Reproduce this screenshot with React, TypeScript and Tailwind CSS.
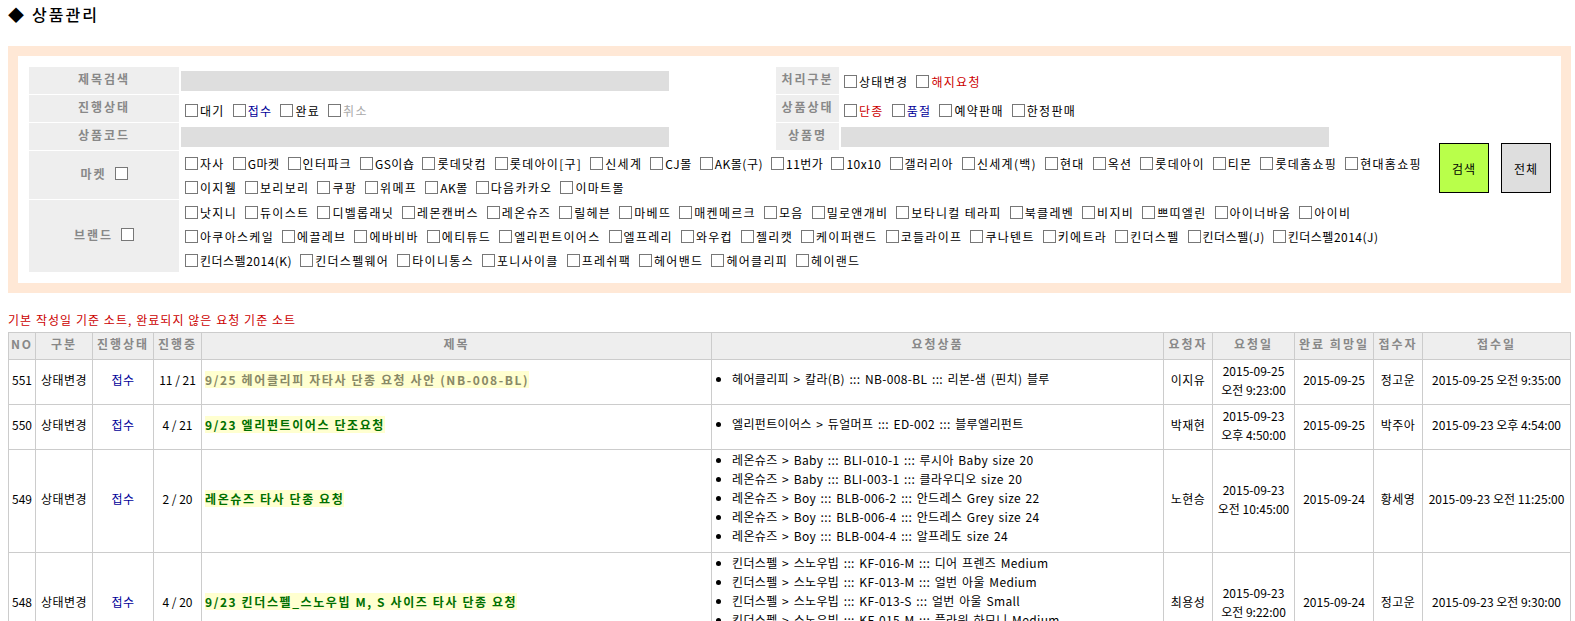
const font = { fontFamily: '"Noto Sans CJK KR", "Liberation Sans", sans-serif' };

type Opt = { t: string; c?: string };

const statusOpts: Opt[] = [
  { t: "대기" },
  { t: "접수", c: "text-[#000099]" },
  { t: "완료" },
  { t: "취소", c: "text-[#aaaaaa]" },
];

const markets: string[][] = [
  ["자사", "G마켓", "인터파크", "GS이숍", "롯데닷컴", "롯데아이[구]", "신세계", "CJ몰", "AK몰(구)", "11번가", "10x10", "갤러리아", "신세계(백)", "현대", "옥션", "롯데아이", "티몬", "롯데홈쇼핑", "현대홈쇼핑"],
  ["이지웰", "보리보리", "쿠팡", "위메프", "AK몰", "다음카카오", "이마트몰"],
];

const brands: string[][] = [
  ["낫지니", "듀이스트", "디벨롭래닛", "레몬캔버스", "레온슈즈", "릴헤븐", "마베뜨", "매켄메르크", "모음", "밀로앤개비", "보타니컬 테라피", "북클레벤", "비지비", "쁘띠엘린", "아이너바움", "아이비"],
  ["아쿠아스케일", "에끌레브", "에바비바", "에티튜드", "엘리펀트이어스", "엘프레리", "와우컵", "젤리캣", "케이퍼랜드", "코들라이프", "쿠나텐트", "키에트라", "킨더스펠", "킨더스펠(J)", "킨더스펠2014(J)"],
  ["킨더스펠2014(K)", "킨더스펠웨어", "타이니통스", "포니사이클", "프레쉬팩", "헤어밴드", "헤어클리피", "헤이랜드"],
];

const rows = [
  {
    no: 551, status: "11 / 21", title: "9/25 헤어클리피 자타사 단종 요청 사안 (NB-008-BL)", muted: true,
    items: ["헤어클리피 > 칼라(B) ::: NB-008-BL ::: 리본-샘 (핀치) 블루"],
    who: "이지유", d1: "2015-09-25", d2: "오전 9:23:00", hope: "2015-09-25", by: "정고운", at: "2015-09-25 오전 9:35:00",
  },
  {
    no: 550, status: "4 / 21", title: "9/23 엘리펀트이어스 단조요청",
    items: ["엘리펀트이어스 > 듀얼머프 ::: ED-002 ::: 블루엘리펀트"],
    who: "박재현", d1: "2015-09-23", d2: "오후 4:50:00", hope: "2015-09-25", by: "박주아", at: "2015-09-23 오후 4:54:00",
  },
  {
    no: 549, status: "2 / 20", title: "레온슈즈 타사 단종 요청",
    items: [
      "레온슈즈 > Baby ::: BLI-010-1 ::: 루시아 Baby size 20",
      "레온슈즈 > Baby ::: BLI-003-1 ::: 클라우디오 size 20",
      "레온슈즈 > Boy ::: BLB-006-2 ::: 안드레스 Grey size 22",
      "레온슈즈 > Boy ::: BLB-006-4 ::: 안드레스 Grey size 24",
      "레온슈즈 > Boy ::: BLB-004-4 ::: 알프레도 size 24",
    ],
    who: "노현승", d1: "2015-09-23", d2: "오전 10:45:00", hope: "2015-09-24", by: "황세영", at: "2015-09-23 오전 11:25:00",
  },
  {
    no: 548, status: "4 / 20", title: "9/23 킨더스펠_스노우빕 M, S 사이즈 타사 단종 요청",
    items: [
      "킨더스펠 > 스노우빕 ::: KF-016-M ::: 디어 프렌즈 Medium",
      "킨더스펠 > 스노우빕 ::: KF-013-M ::: 얼번 아울 Medium",
      "킨더스펠 > 스노우빕 ::: KF-013-S ::: 얼번 아울 Small",
      "킨더스펠 > 스노우빕 ::: KF-015-M ::: 플라워 하모니 Medium",
      "킨더스펠 > 스노우빕 ::: KF-015-S ::: 플라워 하모니 Small",
    ],
    who: "최용성", d1: "2015-09-23", d2: "오전 9:22:00", hope: "2015-09-24", by: "정고운", at: "2015-09-23 오전 9:30:00",
  },
];

const Box = () => (
  <input type="checkbox" className="appearance-none w-[13px] h-[13px] border border-[#777777] bg-white shrink-0 m-0" />
);

// latin labels run narrower than hangul ones in the original font
const Check = ({ t, c }: Opt) => (
  <label className="inline-flex items-center gap-[2px] mr-[8px] whitespace-nowrap">
    <Box />
    <span className={`${/[A-Za-z0-9]/.test(t) ? "tracking-[0.5px]" : "tracking-[1.3px]"} ${c ?? ""}`}>{t}</span>
  </label>
);

const CheckLine = ({ opts }: { opts: Opt[] }) => (
  <div className="flex h-6 items-center">
    {opts.map((o) => (
      <Check key={o.t} {...o} />
    ))}
  </div>
);

const Label = ({ children }: { children: React.ReactNode }) => (
  <td className="bg-[#eeeeee] text-[#888888] font-bold text-center p-0 pb-[4px] align-middle tracking-[2px]">{children}</td>
);

const SearchInput = () => <input className="block h-5 w-[488px] bg-[#dedede] border-0 outline-none" />;

const Th = ({ children, w }: { children: React.ReactNode; w: string }) => (
  <th className={`${w} border border-[#cccccc] text-[#888888] font-bold text-center p-0 pb-[5px] tracking-[2px]`}>{children}</th>
);

const Td = ({ children }: { children: React.ReactNode }) => (
  <td className="border border-[#cccccc] text-center p-0 pb-[5px] align-middle whitespace-nowrap">{children}</td>
);

const Ko = ({ children }: { children: React.ReactNode }) => <span className="tracking-[0.5px]">{children}</span>;

export default function App() {
  return (
    <div className="bg-white text-black text-[12px] leading-[19px] w-[1575px] h-[621px] overflow-hidden px-2" style={font}>
      <h1 className="flex items-center h-[28px] font-medium text-[16px] tracking-[2px] text-black mb-[18px]">
        <span className="mr-[6px]">◆</span>상품관리
      </h1>

      <div className="w-[1563px] border-[10px] border-[#ffe8d6] pt-[10px] pl-[10px] pb-[10px]">
        <table className="border-separate border-spacing-[1px] table-fixed w-[1525px]">
          <colgroup>
            <col className="w-[150px]" />
            <col className="w-[595px]" />
            <col className="w-[63px]" />
            <col className="w-[583px]" />
            <col className="w-[128px]" />
          </colgroup>
          <tbody>
            <tr className="h-[27px]">
              <Label>제목검색</Label>
              <td className="p-0 pl-[1px]">
                <SearchInput />
              </td>
              <Label>처리구분</Label>
              <td className="p-0 pl-[4px] pt-[1px]">
                <CheckLine opts={[{ t: "상태변경" }, { t: "해지요청", c: "text-[#cc0000]" }]} />
              </td>
              <td rowSpan={5} className="p-0 align-middle">
                <div className="flex gap-[12px] pl-[15px] pb-[3px]">
                  <button className="w-[50px] h-[50px] bg-[#b9ff4a] border border-black tracking-[1px]">검색</button>
                  <button className="w-[50px] h-[50px] bg-[#dedede] border border-black tracking-[1px]">전체</button>
                </div>
              </td>
            </tr>
            <tr className="h-[27px]">
              <Label>진행상태</Label>
              <td className="p-0 pl-[5px] pt-[3px]">
                <CheckLine opts={statusOpts} />
              </td>
              <Label>상품상태</Label>
              <td className="p-0 pl-[4px] pt-[3px]">
                <CheckLine opts={[{ t: "단종", c: "text-[#cc0000]" }, { t: "품절", c: "text-[#000099]" }, { t: "예약판매" }, { t: "한정판매" }]} />
              </td>
            </tr>
            <tr className="h-[27px]">
              <Label>상품코드</Label>
              <td className="p-0 pl-[1px]">
                <SearchInput />
              </td>
              <Label>상품명</Label>
              <td className="p-0 pl-[1px]">
                <SearchInput />
              </td>
            </tr>
            <tr>
              <Label>
                <span className="inline-flex items-center gap-2">
                  마켓 <Box />
                </span>
              </Label>
              <td colSpan={3} className="p-0 pl-[5px]">
                {markets.map((line, i) => (
                  <CheckLine key={i} opts={line.map((t) => ({ t }))} />
                ))}
              </td>
            </tr>
            <tr>
              <Label>
                <span className="inline-flex items-center gap-2">
                  브랜드 <Box />
                </span>
              </Label>
              <td colSpan={3} className="p-0 pl-[5px]">
                {brands.map((line, i) => (
                  <CheckLine key={i} opts={line.map((t) => ({ t }))} />
                ))}
              </td>
            </tr>
          </tbody>
        </table>
      </div>

      <p className="mt-[17px] h-[22px] text-[#cc0000] tracking-[1.05px]">기본 작성일 기준 소트, 완료되지 않은 요청 기준 소트</p>

      <table className="border-collapse table-fixed w-[1562px]">
        <thead>
          <tr className="h-[27px] bg-[#eeeeee]">
            <Th w="w-[27px]">NO</Th>
            <Th w="w-[57px]">구분</Th>
            <Th w="w-[61px]">진행상태</Th>
            <Th w="w-[48px]">진행중</Th>
            <Th w="w-[510px]">제목</Th>
            <Th w="w-[452px]">요청상품</Th>
            <Th w="w-[49px]">요청자</Th>
            <Th w="w-[82px]">요청일</Th>
            <Th w="w-[79px]">완료 희망일</Th>
            <Th w="w-[49px]">접수자</Th>
            <Th w="w-[148px]">접수일</Th>
          </tr>
        </thead>
        <tbody>
          {rows.map((r) => (
            <tr key={r.no} className="h-[45px]">
              <Td>{r.no}</Td>
              <Td>
                <Ko>상태변경</Ko>
              </Td>
              <Td>
                <span className="text-[#000099] tracking-[0.5px]">접수</span>
              </Td>
              <Td>{r.status}</Td>
              <td className="border border-[#cccccc] p-0 pl-[3px] pb-[5px] align-middle whitespace-nowrap">
                <span className={`bg-[#ffffd0] font-bold tracking-[1.6px] ${r.muted ? "text-[#888866]" : "text-[#006f00]"}`}>
                  {r.title}
                </span>
              </td>
              <td className="border border-[#cccccc] pl-[3px] pb-[7px] align-middle whitespace-nowrap">
                <ul className="list-disc pl-[17px] tracking-[0.35px] [word-spacing:1.5px]">
                  {r.items.map((it) => (
                    <li key={it}>{it}</li>
                  ))}
                </ul>
              </td>
              <Td>
                <Ko>{r.who}</Ko>
              </Td>
              <Td>
                {r.d1}
                <br />
                {r.d2}
              </Td>
              <Td>{r.hope}</Td>
              <Td>
                <Ko>{r.by}</Ko>
              </Td>
              <Td>{r.at}</Td>
            </tr>
          ))}
        </tbody>
      </table>
    </div>
  );
}
